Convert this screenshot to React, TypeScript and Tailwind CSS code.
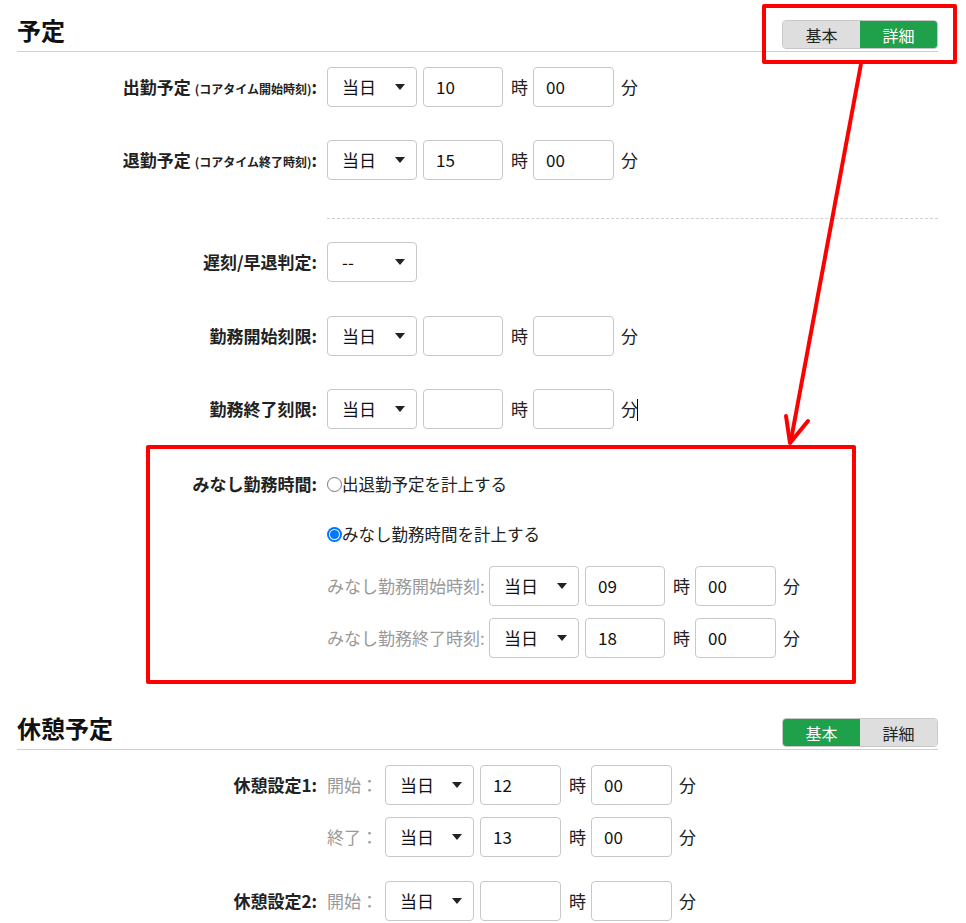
import type { ReactNode } from "react";

function Caret() {
  return (
    <span className="w-0 h-0 border-l-[5px] border-r-[5px] border-t-[6px] border-l-transparent border-r-transparent border-t-[#222]" />
  );
}

function Select({ value = "当日", w = "w-[90px]" }: { value?: string; w?: string }) {
  return (
    <div
      className={`${w} h-10 shrink-0 flex items-center justify-between border border-[#c8c8c8] rounded-[4px] bg-white pl-[14px] pr-[11px] text-[17px] text-[#111]`}
    >
      <span>{value}</span>
      <Caret />
    </div>
  );
}

function Box({ value = "", w = "w-[81px]" }: { value?: string; w?: string }) {
  return (
    <div
      className={`${w} h-10 shrink-0 flex items-center border border-[#c8c8c8] rounded-[4px] bg-white px-[12px] text-[17px] text-[#111]`}
    >
      {value}
    </div>
  );
}

function TimeFields({ hour = "", minute = "", sw = "w-[90px]", hw = "w-[81px]" }: { hour?: string; minute?: string; sw?: string; hw?: string }) {
  return (
    <div className="flex items-center">
      <Select w={sw} />
      <div className="ml-[6px]">
        <Box value={hour} w={hw} />
      </div>
      <span className="ml-2 text-[17px] text-[#222]">時</span>
      <div className="ml-[5px]">
        <Box value={minute} />
      </div>
      <span className="ml-[7px] text-[17px] text-[#222]">分</span>
    </div>
  );
}

function Row({ label, children, className = "" }: { label?: ReactNode; children: ReactNode; className?: string }) {
  return (
    <div className={`flex items-center ${className}`}>
      <div className="w-[310px] shrink-0 text-right pr-[10px] font-bold text-[17px] text-[#222] whitespace-nowrap">
        {label}
      </div>
      {children}
    </div>
  );
}

function Radio({ checked = false }: { checked?: boolean }) {
  return checked ? (
    <span className="w-[15px] h-[15px] shrink-0 rounded-full bg-[#0075ff] flex items-center justify-center">
      <span className="w-[11px] h-[11px] rounded-full bg-white flex items-center justify-center">
        <span className="w-[9px] h-[9px] rounded-full bg-[#0075ff]" />
      </span>
    </span>
  ) : (
    <span className="w-[15px] h-[15px] shrink-0 rounded-full border-[1.5px] border-[#767676] bg-white" />
  );
}

function Toggle({ active }: { active: "basic" | "detail" }) {
  const on = "bg-[#1fa04b] text-white";
  const off = "bg-[#dedede] text-[#222]";
  return (
    <div className="flex w-[156px] h-[29px] rounded-[4px] border border-[#c8c8c8] overflow-hidden text-[16px]">
      <div className={`w-[77px] flex items-center justify-center ${active === "basic" ? on : off}`}>基本</div>
      <div className={`flex-1 flex items-center justify-center ${active === "detail" ? on : off}`}>詳細</div>
    </div>
  );
}

function Header({ title, active }: { title: string; active: "basic" | "detail" }) {
  return (
    <div className="flex items-end justify-between border-b border-[#cfcfcf] pb-[2px]">
      <h2 className="text-[24px] leading-[22px] font-bold text-[#111] pb-[8px]">{title}</h2>
      <Toggle active={active} />
    </div>
  );
}

export default function App() {
  return (
    <div
      className="relative w-[966px] min-h-[923px] overflow-hidden bg-white"
      style={{ fontFamily: '"Noto Sans CJK JP", "Noto Sans", sans-serif' }}
    >
      <div className="pl-[17px] pr-[28px] pt-[19px]">
        <Header title="予定" active="detail" />

        <Row
          className="mt-[15px]"
          label={
            <>
              出勤予定 <span className="text-[12px]">(コアタイム開始時刻)</span>:
            </>
          }
        >
          <TimeFields hour="10" minute="00" hw="w-[80px]" />
        </Row>
        <Row
          className="mt-[33px]"
          label={
            <>
              退勤予定 <span className="text-[12px]">(コアタイム終了時刻)</span>:
            </>
          }
        >
          <TimeFields hour="15" minute="00" hw="w-[80px]" />
        </Row>

        <div className="ml-[310px] mt-[38px] border-t border-dashed border-[#cfcfcf]" />

        <Row className="mt-[23px]" label="遅刻/早退判定:">
          <Select value="--" />
        </Row>
        <Row className="mt-[34px]" label="勤務開始刻限:">
          <TimeFields hw="w-[80px]" />
        </Row>
        <Row className="mt-[33px]" label="勤務終了刻限:">
          <div className="relative">
            <TimeFields hw="w-[80px]" />
            <span className="absolute left-[310px] top-[10px] w-px h-[22px] bg-black" />
          </div>
        </Row>

        <Row className="mt-[45px] h-5" label="みなし勤務時間:">
          <div className="flex items-center text-[16.5px] text-[#222]">
            <Radio />
            出退勤予定を計上する
          </div>
        </Row>
        <Row className="mt-[30px] h-5">
          <div className="flex items-center text-[16.5px] text-[#222]">
            <Radio checked />
            みなし勤務時間を計上する
          </div>
        </Row>
        <Row className="mt-[22px]">
          <span className="w-[162px] shrink-0 text-[17px] text-[#999]">みなし勤務開始時刻:</span>
          <TimeFields hour="09" minute="00" hw="w-[80px]" />
        </Row>
        <Row className="mt-[12px]">
          <span className="w-[162px] shrink-0 text-[17px] text-[#999]">みなし勤務終了時刻:</span>
          <TimeFields hour="18" minute="00" hw="w-[80px]" />
        </Row>

        <div className="mt-[59px]">
          <Header title="休憩予定" active="basic" />
        </div>

        <Row className="mt-[15px]" label="休憩設定1:">
          <span className="w-[58px] shrink-0 text-[17px] text-[#999]">開始：</span>
          <TimeFields hour="12" minute="00" sw="w-[89px]" />
        </Row>
        <Row className="mt-[12px]">
          <span className="w-[58px] shrink-0 text-[17px] text-[#999]">終了：</span>
          <TimeFields hour="13" minute="00" sw="w-[89px]" />
        </Row>
        <Row className="mt-[24px]" label="休憩設定2:">
          <span className="w-[58px] shrink-0 text-[17px] text-[#999]">開始：</span>
          <TimeFields sw="w-[89px]" />
        </Row>
      </div>

      {/* annotations */}
      <div className="absolute left-[762px] top-[4px] w-[195px] h-[60px] border-4 border-[#ff0000] rounded-[2px] pointer-events-none" />
      <div className="absolute left-[146px] top-[445px] w-[710px] h-[239px] border-4 border-[#ff0000] rounded-[2px] pointer-events-none" />
      <svg className="absolute inset-0 pointer-events-none" width="966" height="923">
        <line x1="861" y1="64" x2="791" y2="440" stroke="#ff0000" strokeWidth="4" />
        <polyline
          points="786,416 790,443 808,421"
          fill="none"
          stroke="#ff0000"
          strokeWidth="4"
          strokeLinecap="round"
          strokeLinejoin="round"
        />
      </svg>
    </div>
  );
}
